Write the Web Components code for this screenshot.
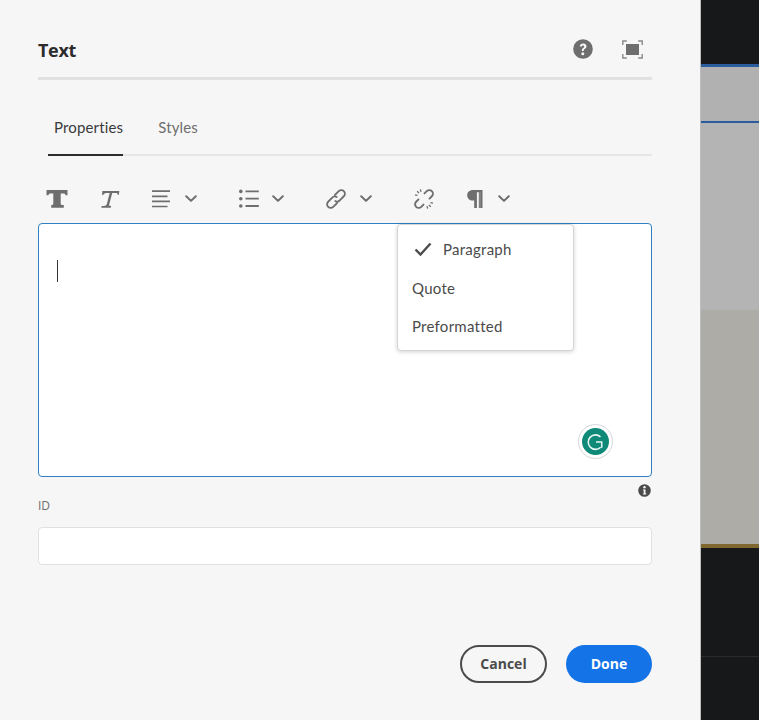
<!DOCTYPE html>
<html lang="en"><head><meta charset="utf-8"><title>Text</title>
<style>
html,body{margin:0;height:100%;background:#17181a}
body{font-family:"Lato","Open Sans",sans-serif;overflow:hidden;font-variant-ligatures:none}
</style></head><body>
<x-app>
  <x-panel>
    <x-header title="Text"></x-header>
    <x-tabs></x-tabs>
    <x-toolbar></x-toolbar>
    <x-editor>
      <x-menu slot="overlay"></x-menu>
      <x-grammarly slot="overlay"></x-grammarly>
    </x-editor>
    <x-field label="ID"></x-field>
    <x-footer></x-footer>
  </x-panel>
  <x-backdrop></x-backdrop>
</x-app>
<script>
function def(name, html){
  customElements.define(name, class extends HTMLElement{
    constructor(){super();this.attachShadow({mode:'open'}).innerHTML = typeof html==='function'?html(this):html;}
    connectedCallback(){ if(typeof html==='function'){this.shadowRoot.innerHTML=html(this);} }
  });
}
const ICON={
 bold:'<path d="M1.500 3H22.500V8.200H20.500C20.300 7 19.800 6.400 18.500 6.400H15.700V16.500C15.700 17.400 16.100 17.900 16.900 17.900H18.800V20.700H6.200V17.900H7.100C7.900 17.900 8.300 17.400 8.300 16.500V6.400H5.500C4.200 6.400 3.700 7 3.500 8.200H1.500Z" fill="currentColor"/>',
 italic:'<path d="M4.300 4H21.400L20.700 8L19.800 7.900C19.800 6.700 19.200 6.100 17.600 6.100H14.200L11.200 17.500C11 18.400 11.300 18.900 12.200 18.900H13.200L12.800 20.700H3.300L3.700 18.900H5.900C7.300 18.900 8.400 18.400 8.700 17.500L11.700 6.100H9C7 6.100 6.200 6.700 5.200 8.100L4.100 8Z" fill="currentColor"/>',
 align:'<path d="M3 4.200h18M3 9.300h15.500M3 14.400h18M3 19.500h15.500" stroke="currentColor" stroke-width="1.700" fill="none"/>',
 list:'<g fill="currentColor"><circle cx="3.800" cy="4.400" r="1.800"/><circle cx="3.800" cy="11.700" r="1.800"/><circle cx="3.800" cy="19" r="1.800"/></g><path d="M8.500 4.400h13.300M8.500 11.700h13.300M8.500 19h13.300" stroke="currentColor" stroke-width="1.800" fill="none"/>',
 link:'<g fill="none" stroke="currentColor" stroke-width="1.800" stroke-linecap="round"><path d="M10.900 8L14.750 4.150A3.600 3.600 0 0 1 19.850 9.250L16 13.100A3.600 3.600 0 0 1 11.300 13.900"/><path d="M13.100 16L9.250 19.850A3.600 3.600 0 0 1 4.150 14.750L8 10.900A3.600 3.600 0 0 1 12.700 10.100"/></g>',
 unlink:'<g fill="none" stroke="currentColor" stroke-width="1.900" stroke-linecap="round"><path d="M12.500 6.400L14.750 4.150A3.600 3.600 0 0 1 19.850 9.250L17.500 11.600"/><path d="M11.500 17.600L9.250 19.850A3.600 3.600 0 0 1 4.150 14.750L6.500 12.400"/></g><path d="M5.200 4.200l1.900 1.900M3 7.900l2.500.5M8.400 2.400l.6 2.400M18.800 19.800l-1.900-1.900M21 16.100l-2.500-.5M15.600 21.600l-.6-2.400" stroke="currentColor" stroke-width="1.300" fill="none"/>',
 pilcrow:'<path d="M19.500 3H10c-3.600 0-5.800 2.300-5.800 5.300s2.200 5.300 5.600 5.300h1.400V21h2.700V5.200h1.900V21h3.700z" fill="currentColor"/><path d="M17 5.200V21" stroke="#a9a9a9" stroke-width=".7"/>',
};
const ic=(n,s=24)=>`<svg width="${s}" height="${s}" viewBox="0 0 24 24" style="display:block">${ICON[n]}</svg>`;
const chev='<svg width="12" height="8" viewBox="0 0 12 8" style="display:block"><path d="M1.200 1.200L6 5.900l4.800-4.700" fill="none" stroke="currentColor" stroke-width="2" stroke-linecap="round" stroke-linejoin="round"/></svg>';

def('x-app',`<style>:host{display:flex;width:759px;height:720px;overflow:hidden}</style><slot></slot>`);

def('x-panel',`<style>:host{display:flex;flex-direction:column;width:701px;height:720px;box-sizing:border-box;padding:0 48px 0 38px;background:#f6f6f6;border-right:1px solid #bdbdbd;flex:none}</style><slot></slot>`);

def('x-backdrop',`<style>:host{display:flex;flex-direction:column;flex:1;min-width:0}
div{flex:none}
.d1{height:64px;background:#17181a}
.b1{height:3px;background:#2a5c9e}
.g1{height:54px;background:#b1b1b1}
.b2{height:2px;background:#2a5c9e}
.g2{height:187px;background:#b4b4b4}
.g3{height:234px;background:#adaca7}
.y{height:4px;background:#80692f}
.d2{height:109px;background:#17181a;border-bottom:1px solid #2a2b2d;box-sizing:border-box}
.d3{flex:1;background:#17181a}</style>
<div class="d1"></div><div class="b1"></div><div class="g1"></div><div class="b2"></div><div class="g2"></div><div class="g3"></div><div class="y"></div><div class="d2"></div><div class="d3"></div>`);

def('x-header',el=>`<style>:host{display:flex;align-items:center;justify-content:space-between;height:77px;border-bottom:3px solid #e1e1e1;flex:none}
h1{margin:23px 0 0;font:700 18px/1 "Open Sans",sans-serif;color:#2c2c2c;letter-spacing:-.3px}
.r{display:flex;align-items:center;gap:29px;margin:21px 0 0;color:#6e6e6e;padding-right:9px}</style>
<h1>Text</h1>
<div class="r">
<svg width="20" height="20" viewBox="0 0 20 20"><circle cx="10" cy="10" r="9.800" fill="#6e6e6e"/><path d="M6.800 7.600C6.900 5.600 8.200 4.500 10.200 4.500c2 0 3.300 1.100 3.300 2.800 0 1.400-.8 2.100-1.800 2.800-.7.500-.9.800-.9 1.500v.3H8.900v-.5c0-1.100.4-1.700 1.300-2.400.7-.5 1-.9 1-1.500 0-.7-.4-1.100-1.100-1.100-.8 0-1.200.5-1.300 1.200z" fill="#f6f6f6"/><circle cx="9.800" cy="14.800" r="1.500" fill="#f6f6f6"/></svg>
<svg width="21" height="19" viewBox="0 0 21 19"><rect x="4" y="4" width="13" height="11" fill="#6e6e6e"/><path d="M.8 5V1h4M16.200 1h4v4M.8 14v4h4M16.200 18h4v-4" fill="none" stroke="#8a8a8a" stroke-width="1.400"/></svg>
</div>`);

def('x-tabs',`<style>:host{display:flex;height:76px;box-sizing:border-box;margin-left:10px;border-bottom:2px solid #e6e6e6;flex:none;align-items:stretch}
.t{font-size:15px;letter-spacing:.15px;padding:19px 0 0 6px;display:flex;align-items:center;color:#6e6e6e;margin-bottom:-2px;border-bottom:2px solid transparent;box-sizing:border-box}
.a{color:#3a3a3a;border-bottom-color:#2c2c2c;margin-right:29px}</style>
<div class="t a">Properties</div><div class="t">Styles</div>`);

def('x-toolbar',`<style>:host{display:flex;align-items:center;height:67px;flex:none;gap:27px;padding-left:6.500px;color:#6e6e6e;box-sizing:border-box;padding-top:19px}
.g{display:flex;align-items:center;gap:11.500px;margin-right:13px}
.f{margin-right:2.500px}</style>
<div class="f">${ic('bold')}</div>
<div>${ic('italic')}</div>
<div class="g">${ic('align')}${chev}</div>
<div class="g">${ic('list')}${chev}</div>
<div class="g">${ic('link')}${chev}</div>
<div>${ic('unlink')}</div>
<div class="g">${ic('pilcrow')}${chev}</div>`);

def('x-editor',`<style>:host{display:block;position:relative;height:254px;box-sizing:border-box;background:#fff;border:1px solid #2f7fc1;border-radius:4px;flex:none;padding:36px 18px}
i{display:block;width:1px;height:22px;background:#333}</style>
<i></i><slot name="overlay"></slot>`);

def('x-menu',`<style>:host{position:absolute;left:358px;top:0;width:177px;height:127px;box-sizing:border-box;background:#fff;border:1px solid #d5d5d5;border-radius:4px;box-shadow:0 1px 4px rgba(0,0,0,.18);display:flex;flex-direction:column;padding:5px 0;font-size:15px;letter-spacing:.25px;color:#4b4b4b}
div{flex:none;height:38px;display:flex;align-items:center;padding-left:14px;white-space:nowrap}
div:first-of-type{margin-bottom:1px}
svg{margin-right:11px;margin-left:2px}</style>
<div><svg width="18" height="15" viewBox="0 0 18 15"><path d="M1.500 7.500l5 5L16.500 1.500" fill="none" stroke="#4b4b4b" stroke-width="2.400"/></svg>Paragraph</div><div>Quote</div><div>Preformatted</div>`);

def('x-grammarly',`<style>:host{position:absolute;right:38px;bottom:17px;width:35px;height:35px;box-sizing:border-box;border:1px solid #d5d7dd;border-radius:50%;background:#fff;display:flex;align-items:center;justify-content:center}</style>
<svg width="27" height="27" viewBox="0 0 26 26"><circle cx="13" cy="13" r="13" fill="#0f8a78"/><path d="M17.800 8.500A7 7 0 1 0 18 18.500M13.500 13.500h5.500v5.500" fill="none" stroke="#e8f5f2" stroke-width="1.500"/></svg>`);

def('x-field',el=>`<style>:host{display:block;flex:none}
.top{display:flex;justify-content:space-between;align-items:flex-start;height:50px}
label{font:12px "Open Sans",sans-serif;color:#6e6e6e;margin-top:20px;display:block}
svg{margin:7px 1px 0 0;display:block}
.in{height:38px;box-sizing:border-box;background:#fff;border:1px solid #e1e1e1;border-radius:4px}</style>
<div class="top"><label>${el.getAttribute('label')||''}</label>
<svg width="13" height="13" viewBox="0 0 13 13"><circle cx="6.500" cy="6.500" r="6.300" fill="#4b4b4b"/><circle cx="6.500" cy="3.300" r="1.200" fill="#f6f6f6"/><path d="M5 5.400h2.500v4.200h.8v1H4.900v-1h.8V6.400H5z" fill="#f6f6f6"/></svg></div>
<div class="in"></div>`);

def('x-footer',`<style>:host{display:flex;justify-content:flex-end;gap:19px;margin-top:80px;flex:none}
button{all:unset;box-sizing:border-box;height:38px;padding-bottom:2px;border-radius:19px;display:flex;align-items:center;justify-content:center;font:700 14px "Open Sans",sans-serif}
.c{width:87px;border:2px solid #4b4b4b;color:#4b4b4b}
.d{width:86px;background:#1473e6;color:#fff}</style>
<button class="c">Cancel</button><button class="d">Done</button>`);
</script>
</body></html>
